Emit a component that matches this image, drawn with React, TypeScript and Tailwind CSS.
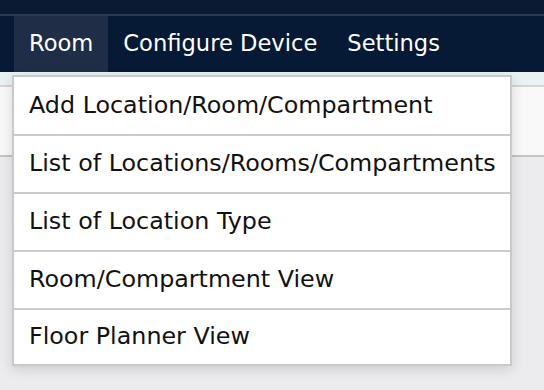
import React from "react";

const items = [
  "Add Location/Room/Compartment",
  "List of Locations/Rooms/Compartments",
  "List of Location Type",
  "Room/Compartment View",
  "Floor Planner View",
];

export default function App() {
  return (
    <div
      className="relative w-[544px] h-[390px] overflow-hidden bg-[#ececef]"
      style={{ fontFamily: '"DejaVu Sans", Verdana, sans-serif' }}
    >
      <div className="h-[14px] bg-[#0a1a33]" />
      <div className="h-[2px] bg-[#2c3a50]" />
      <nav className="flex h-[56px] bg-[#061935] pl-[14px] text-[22.6px] text-white">
        <div className="flex items-center bg-[#1f2e46] px-[15px]">Room</div>
        <div className="flex items-center px-[15px]">Configure Device</div>
        <div className="flex items-center px-[15px]">Settings</div>
      </nav>
      <div className="h-[15px] border-b-2 border-[#d2d4d6] bg-[#e9f1f4]" />
      <div className="h-[70px] border-b-2 border-[#c4c4c6] bg-[#f9f9fa]" />

      <div className="absolute left-[12px] top-[75px] w-[500px] border-2 border-[#c9c9c9] bg-white shadow-[0_3px_12px_rgba(0,0,0,0.14)]">
        <div className="flex h-[57px] items-center pl-[15px] text-[23.8px] text-[#111]">
          {items[0]}
        </div>
        {items.slice(1).map((t, i) => (
          <div
            key={t}
            className={`flex ${
              i === 3 ? "h-[56px]" : "h-[58px]"
            } items-center border-t-2 border-[#cbcbcb] pl-[15px] text-[23.8px] text-[#111]`}
          >
            {t}
          </div>
        ))}
      </div>
    </div>
  );
}
